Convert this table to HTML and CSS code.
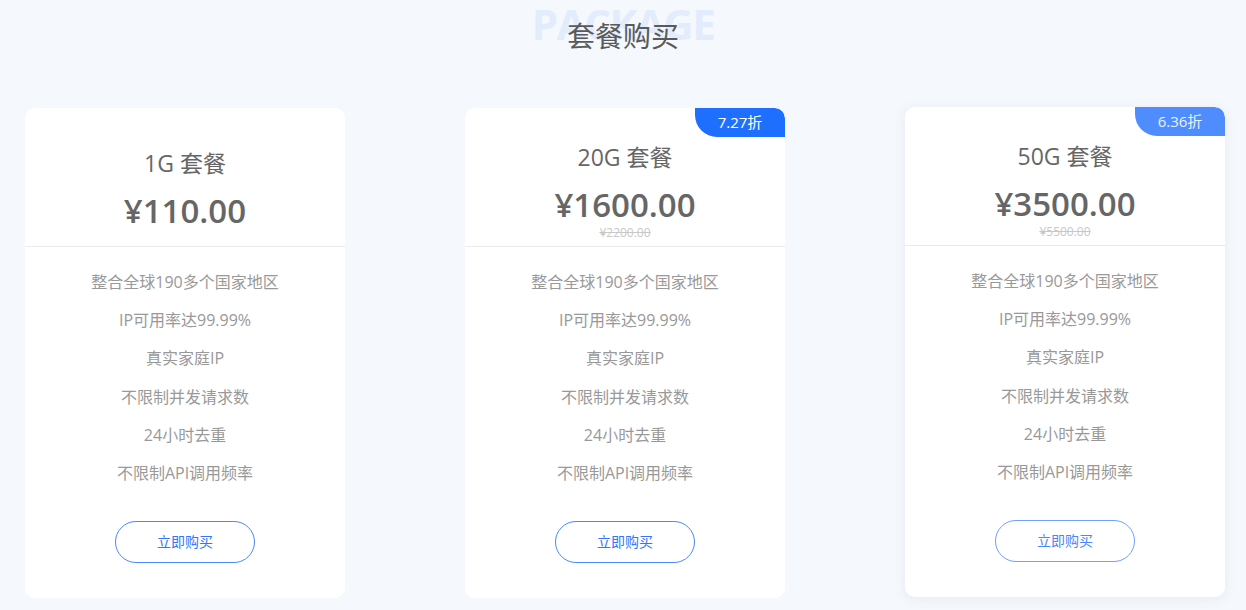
FILE: index.html
```html
<!DOCTYPE html>
<html lang="zh">
<head>
<meta charset="utf-8">
<link rel="stylesheet" href="styles.css">
</head>
<body>
<div class="page">
  <div class="heading">
    <span class="heading-bg">PACKAGE</span>
    <h2 class="heading-text">套餐购买</h2>
  </div>
  <div class="cards">
    <div class="card">
      <div class="card-head">
        <div class="card-title">1G 套餐</div>
        <div class="card-price">¥110.00</div>
      </div>
      <ul class="features">
        <li>整合全球190多个国家地区</li>
        <li>IP可用率达99.99%</li>
        <li>真实家庭IP</li>
        <li>不限制并发请求数</li>
        <li>24小时去重</li>
        <li>不限制API调用频率</li>
      </ul>
      <div class="card-foot"><a class="buy">立即购买</a></div>
    </div>
    <div class="card">
      <span class="badge">7.27折</span>
      <div class="card-head">
        <div class="card-title">20G 套餐</div>
        <div class="card-price">¥1600.00</div>
        <div class="card-orig">¥2200.00</div>
      </div>
      <ul class="features">
        <li>整合全球190多个国家地区</li>
        <li>IP可用率达99.99%</li>
        <li>真实家庭IP</li>
        <li>不限制并发请求数</li>
        <li>24小时去重</li>
        <li>不限制API调用频率</li>
      </ul>
      <div class="card-foot"><a class="buy">立即购买</a></div>
    </div>
    <div class="card card-hover">
      <span class="badge badge-light">6.36折</span>
      <div class="card-head">
        <div class="card-title">50G 套餐</div>
        <div class="card-price">¥3500.00</div>
        <div class="card-orig">¥5500.00</div>
      </div>
      <ul class="features">
        <li>整合全球190多个国家地区</li>
        <li>IP可用率达99.99%</li>
        <li>真实家庭IP</li>
        <li>不限制并发请求数</li>
        <li>24小时去重</li>
        <li>不限制API调用频率</li>
      </ul>
      <div class="card-foot"><a class="buy buy-light">立即购买</a></div>
    </div>
  </div>
</div>
</body>
</html>
```
FILE: styles.css
```css
* { box-sizing: border-box; }
html, body { margin: 0; padding: 0; }
body {
  background: #f5f8fc;
  font-family: "Open Sans", "Noto Sans CJK SC", sans-serif;
  color: #666;
  overflow: hidden;
}
.page { width: 1246px; height: 610px; }
.heading {
  position: relative;
  height: 108px;
  text-align: center;
}
.heading-bg {
  position: absolute;
  left: 0; right: 0; top: 0;
  text-align: center;
  font-size: 42px;
  font-weight: 700;
  letter-spacing: -1.5px;
  line-height: 48px;
  color: #e3ecfc;
}
.heading-text {
  position: relative;
  margin: 0;
  padding-top: 16px;
  font-size: 28px;
  font-weight: 400;
  line-height: 40px;
  color: #5a5a5a;
}
.cards {
  display: flex;
  gap: 120px;
  padding-left: 25px;
}
.card {
  position: relative;
  width: 320px;
  height: 490px;
  background: #fff;
  border-radius: 10px;
  overflow: hidden;
}
.card-hover {
  transform: translateY(-1px);
  box-shadow: 0 2px 12px rgba(120, 140, 170, 0.12);
}
.badge {
  position: absolute;
  top: 0; right: 0;
  width: 90px;
  height: 29px;
  background: #1f6fff;
  color: #fff;
  font-size: 15px;
  line-height: 29px;
  text-align: center;
  border-radius: 0 10px 0 22px;
}
.badge-light { background: #4f8dff; color: #eaf2ff; }
.card-head {
  height: 139px;
  border-bottom: 1px solid #ebebeb;
  display: flex;
  flex-direction: column;
  align-items: center;
  justify-content: center;
  padding-top: 30px;
}
.card-title {
  font-size: 23px;
  line-height: 30px;
  color: #666;
}
.card-price {
  font-size: 33px;
  font-weight: 600;
  line-height: 50px;
  margin-top: 8px;
  color: #666;
}
.card-orig {
  font-size: 12px;
  line-height: 18px;
  margin-top: -6px;
  color: #c8c8c8;
  text-decoration: line-through;
}
.features {
  list-style: none;
  margin: 0;
  padding: 16px 0 0;
  text-align: center;
}
.features li {
  font-size: 16px;
  line-height: 38.2px;
  color: #999;
}
.card-foot {
  display: flex;
  justify-content: center;
  padding-top: 29px;
}
.buy {
  display: block;
  width: 140px;
  height: 42px;
  border: 1px solid #4a88ff;
  border-radius: 21px;
  color: #2f76ff;
  font-size: 14px;
  line-height: 40px;
  text-align: center;
}
.buy-light { border-color: #6ea0ff; color: #4a86ff; }
```
